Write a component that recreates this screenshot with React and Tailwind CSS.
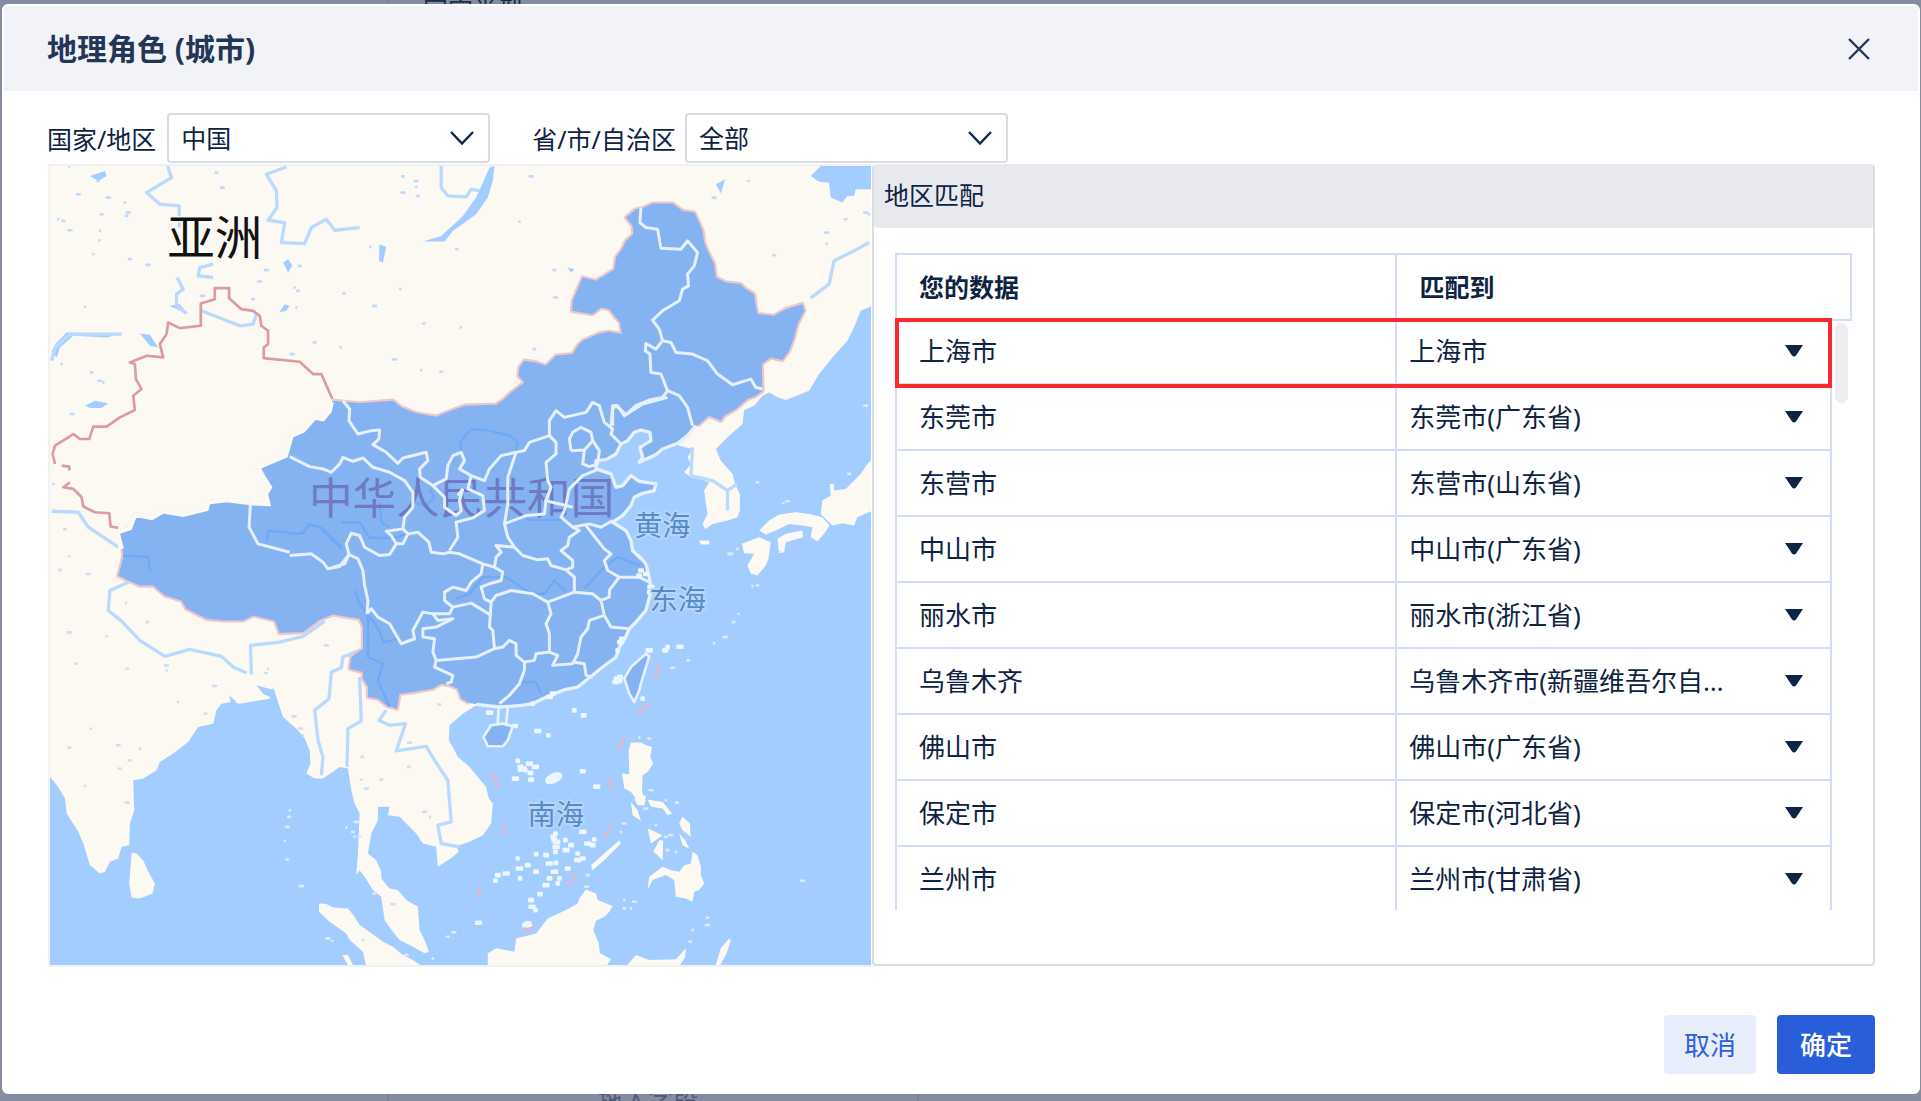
import React, { useState } from 'react';

const rows = [
  { source: '上海市', target: '上海市' },
  { source: '东莞市', target: '东莞市(广东省)' },
  { source: '东营市', target: '东营市(山东省)' },
  { source: '中山市', target: '中山市(广东省)' },
  { source: '丽水市', target: '丽水市(浙江省)' },
  { source: '乌鲁木齐', target: '乌鲁木齐市(新疆维吾尔自治区)' },
  { source: '佛山市', target: '佛山市(广东省)' },
  { source: '保定市', target: '保定市(河北省)' },
  { source: '兰州市', target: '兰州市(甘肃省)' },
];

// The outlines are drawn tile by tile, each list is relative to its tile origin
const shift = (dx, dy, list) =>
  list
    .split(' ')
    .map((p) => {
      const [x, y] = p.split(',').map(Number);
      return `${x + dx},${y + dy}`;
    })
    .join(' ');

const nw = (list) => shift(0, 0, list);
const ne = (list) => shift(1230, 0, list);
const sw = (list) => shift(0, 1170, list);
const se = (list) => shift(1230, 1170, list);
const mid = (list) => shift(750, 720, list);

const chinaNorth = [
  nw('878,720 960,728 1060,720 1085,740 1130,758 1190,768'),
  ne('10,748 45,735 140,732 165,715 185,695 225,665 207,645 210,620 225,600 260,605 290,615 320,585 370,580 385,555 400,540 450,518 480,513 518,520 512,485 495,465 480,445 455,440 430,460 368,450 370,420 385,385 400,350 440,360 465,345 495,325 500,290 520,262 530,240 552,220 550,195 530,170 560,145 585,140 610,128 670,128 700,150 735,155 745,175 760,210 765,245 775,270 795,310 800,350 830,365 875,370 890,385 915,400 920,435 925,460 975,465 1010,445 1060,430 1066,450 1045,490 1035,530 1020,570 1000,598 965,590 938,610 940,690 920,705 895,715 860,745 825,765 815,780 780,765 745,795'),
].join(' ');

const chinaCoast = [
  ne('740,795 715,825 685,848 640,865 620,882 570,905 580,890 572,860 605,840 602,815 575,808 555,815 535,840 515,850 500,880 470,897 440,900 440,925 485,940 500,980 520,975 545,945 570,962 620,970 615,990 580,998 555,1010 545,1035 520,1065 490,1085 530,1110 545,1140 550,1170 575,1195'),
  se('568,15 590,40 600,80 606,120 590,180 560,215 540,235 528,262 510,290 500,320 460,350 420,382 385,410 345,418 310,432 280,445 250,460 215,465 180,468 150,470 80,462'),
].join(' ');

const chinaSouth = [
  se('60,458 35,445 25,415 0,405'),
  sw('1205,400 1180,415 1120,425 1080,430 1072,475 1040,465 1015,445 985,440 985,410 970,385 970,365 930,355 935,320 970,295 970,230 960,205 925,200 880,192 840,208 790,245 720,248 705,210 640,195 610,210 550,210 500,205 470,190 440,175 425,150 375,135 340,105 300,105 265,90 235,75 245,40 250,15'),
  nw('248,1165 232,1115 270,1102 285,1062 335,1072 370,1052 430,1062 500,1045 505,1025 560,1018 640,1028 685,1030 678,1000 690,980 668,945 655,920 738,885 755,825 790,810 825,770 850,775 870,750'),
].join(' ');

const land = [
  [
    nw('30,15 2345,15'),
    ne('1085,45 1110,62 1140,65 1145,110 1180,125 1195,105 1215,105 1220,85 1270,85 1270,435 1235,450 1215,500 1195,540 1150,590 1110,640 1080,690 1010,718 985,710 960,695 940,705 915,735 885,748 880,790 835,830 800,865 815,900 850,940 858,970 872,1000 872,1050 865,1070 835,1080 790,1090 768,1105 760,1090 775,1060 770,1030 765,990 780,965 750,955 725,950 705,935 725,910 715,890 730,865 690,855 500,700 300,1100'),
    se('100,300 80,465 40,490 0,525'),
    sw('1230,525 1228,570 1245,600'),
    se('25,620 60,650 110,710 118,745 130,760 125,820 100,855 60,875 20,888 28,905 10,920'),
    sw('1225,930 1195,950 1190,890 1150,880 1130,850 1110,830 1080,800 1045,795 1050,770 1015,770 1015,810 995,850 985,910 1010,930 1025,965 1025,985 1050,1015 1075,1020 1100,1050 1135,1070 1140,1140 1155,1170 1168,1205 1155,1210 1110,1185 1080,1170 1060,1145 1035,1110 1025,1040 1000,1020 975,980 960,960 950,975 955,910 960,790 945,760 935,720 925,655 900,650 850,685 825,685 800,670 812,640 810,600 795,565 775,540 730,500 710,440 700,410 690,445 600,460 575,455 545,460 530,480 520,520 475,530 445,575 400,610 360,635 350,660 310,685 280,690 283,780 270,820 268,885 245,890 235,925 210,935 195,965 180,970 150,945 130,880 115,845 80,790 75,745 55,710 30,680'),
  ].join(' '),
  sw('275,908 290,910 310,930 325,965 345,1000 338,1030 300,1045 275,1042 268,1000 272,950'),
  sw('838,1060 860,1062 880,1072 925,1075 945,1100 960,1125 1010,1160 1030,1175 1060,1190 1090,1215 1120,1230 1150,1250 980,1250 970,1205 930,1170 920,1150 870,1115 838,1085'),
  se('410,1018 440,1030 445,1050 490,1068 480,1085 465,1100 440,1112 432,1140 448,1180 452,1210 485,1228 470,1250 115,1250 115,1210 140,1195 195,1205 200,1165 260,1150 295,1105 350,1080 385,1060 390,1045'),
  se('530,1250 560,1215 600,1230 680,1228 710,1195 708,1220 690,1250'),
  se('545,577 575,577 590,585 608,590 603,620 612,640 595,665 580,675 578,725 590,755 560,745 545,725 525,715 518,670 540,672 538,600'),
  se('730,905 745,915 755,950 755,975 765,1000 750,1020 735,1025 730,1055 710,1045 680,1040 675,990 650,975 610,990 595,1020 600,980 620,965 640,950 665,960 690,965 705,945 725,940'),
  se('595,835 640,855 605,880'),
  se('545,755 565,780 575,812 550,795'),
  se('612,905 630,870 642,870 640,930 625,915'),
  se('700,800 722,820 724,860 700,840 690,820'),
  se('690,850 708,870 720,895 700,885'),
  se('595,748 640,755 668,790 655,795 640,775 605,770'),
  se('555,745 590,735 585,765 565,765'),
  se('510,870 515,880 470,925 430,960 425,945'),
  se('840,1165 845,1172 830,1215 810,1250 798,1250 815,1195'),
  sw('908,1215 925,1215 940,1245 925,1245'),
  ne('1270,895 1270,1050 1225,1070 1215,1095 1180,1088 1150,1095 1115,1060 1120,1020 1145,1005 1142,970 1155,970 1155,990 1190,985 1235,940 1255,910'),
  ne('930,1110 960,1080 990,1062 1040,1055 1080,1060 1120,1070 1142,1095 1125,1120 1105,1142 1085,1130 1090,1100 1060,1095 1020,1090 980,1110 950,1122'),
  ne('985,1135 1010,1120 1060,1110 1062,1130 1010,1145 1005,1175 990,1178'),
  ne('878,1150 930,1130 965,1145 958,1195 950,1215 925,1245 905,1240 895,1215 915,1180 885,1178'),
  ne('750,1140 780,1140 780,1152 755,1152'),
];

const provinces = [
  mid('160,0 180,25 178,60 205,100 245,90 270,88 268,115 250,132 290,155 325,188 340,172 410,155 415,180 390,205 392,230 430,255 465,290 465,320 500,345 515,330 510,300 520,265'),
  mid('0,168 60,198 100,205 125,215 150,190 160,170 190,182 220,172 250,200 300,215 345,240 370,275 370,320 345,350 340,385 290,392 305,405 320,430 300,462 270,465 225,440 210,405 185,398 170,430 178,462'),
  mid('0,465 65,460 100,485 115,505 150,498 178,462 205,475 220,510 225,555 235,600 232,640'),
  mid('340,385 355,400 340,430 320,430'),
  mid('355,400 385,395 418,425 425,455 460,460 480,455 510,460 545,475 580,490 615,500 640,515 635,540 600,550 575,560 585,595 605,605'),
  mid('430,255 470,235 475,195 490,165 515,155 525,180 510,205 545,225 585,240 600,205 635,165 680,155'),
  mid('545,225 535,265 580,285 585,330 550,352 500,365 505,410 480,450'),
  mid('520,265 505,285'),
  mid('680,155 665,200 655,230 655,310 645,370 655,410 675,440 700,465 745,478 775,475 785,495 830,508 855,530 855,575'),
  mid('680,155 705,150 720,125 780,105 800,125 800,160 770,185 775,240 785,260 770,300 765,340 710,345 645,370'),
  mid('780,105 780,60 800,30 825,50 890,35 910,5 930,15 945,65 970,85 965,100 995,130'),
  mid('965,75 970,15 985,15 1005,45 1060,10 1135,-10'),
  mid('845,150 840,115 850,95 875,80 905,95 910,120 885,148 845,150'),
  mid('885,148 880,190 900,198 925,190 930,150 910,120'),
  mid('930,205 880,225 840,265 830,310 825,330'),
  mid('765,300 830,315 850,320'),
  mid('825,330 815,350 850,380 900,370 935,380 970,360'),
  mid('850,380 870,390 840,410 835,435 815,450 850,480 850,500 830,508'),
  mid('890,375 925,420 945,445 965,460 945,480 955,510 990,530 960,570 960,590 935,600'),
  mid('990,530 1050,530 1080,545'),
  mid('675,440 620,435 635,455 620,470 615,500'),
  mid('580,490 575,520 545,545 530,570 490,560 465,575 465,600 490,620 480,640 430,640 400,635 370,690 375,715 335,730 300,670 265,650 245,625 232,640'),
  mid('430,640 445,660 490,655 440,680 400,685 400,710 435,715 430,755 440,780 500,775 560,770 615,745 610,690 600,680 605,605'),
  mid('490,620 545,608 565,620 605,645'),
  mid('605,605 620,585 665,570 730,580 775,605 785,640 770,670 780,700 780,755 740,760 735,780 705,785 680,765 680,730 660,720 640,740 615,745'),
  mid('775,605 855,575 910,580 935,600 945,645 900,660 895,685 875,710 865,760 850,790 790,795 805,765 780,755'),
  mid('945,645 965,680 1020,685'),
  mid('850,785 885,790 890,825 910,830'),
  mid('705,785 705,810 690,850 660,885 630,910'),
  mid('440,780 435,800 490,825 485,845 470,850'),
  ne('575,140 572,185 590,200 625,205 635,262 695,265 715,240 745,275 735,315 715,340 718,375 700,385 690,420 640,450 610,478 630,505 640,540 620,565 590,548 588,570 602,580 605,635 635,640 655,690 640,710 600,718 560,735 530,762 500,735 490,745 490,795'),
  ne('640,540 665,545 680,575 730,580 775,600 805,640 850,672 905,655 920,680 940,685'),
  ne('655,690 690,705 715,740 730,795'),
];

const seaIslands = [
  se('590,310 600,318 575,400 570,420 555,455 540,430 525,385 545,350'),
  se('125,525 160,520 190,528 175,570 160,588 115,588 102,560'),
];

const chinaRivers = [
  mid('0,400 40,398 60,372 90,380 160,448'),
  mid('155,365 210,365 240,412 320,412 350,400'),
  mid('515,155 512,125 545,85 600,90 660,105 685,125 680,155'),
  mid('270,305 275,365 300,380'),
  mid('370,305 410,315 435,290 420,265'),
  mid('710,358 815,358'),
  mid('500,595 540,580 580,530 650,530 725,580 765,580 795,540 830,575'),
  mid('885,565 945,500 985,470 1050,495'),
  mid('235,640 235,770 280,790 265,840 300,920'),
  mid('195,570 210,610 270,690 280,725 330,715'),
  mid('695,845 740,845 755,880'),
  sw('250,15 325,20 330,60'),
  nw('680,1145 685,1110 785,1120 810,1090 850,1105 905,1160'),
];

const rivers = [
  nw('383,15 395,50 320,95 360,130 418,135 418,200'),
  nw('740,18 680,40 710,90 712,140 685,178 735,185 725,245 795,248 815,200 860,175 885,208 960,200'),
  nw('1205,15 1205,80 1225,105 1280,108 1295,85 1320,90'),
  nw('520,310 480,320 475,345 520,350'),
  nw('412,350 430,385 410,400 410,435 440,458'),
  nw('485,450 600,495 640,490 650,460'),
  nw('35,1052 115,1055 145,1100 235,1160'),
  nw('35,600 45,560 90,520 245,520'),
  sw('265,95 210,120 205,180 245,212 300,270 375,318 450,297 545,318 580,350 620,368'),
  sw('635,372 632,285 720,275 790,258 855,212'),
  sw('960,300 910,320 905,352 875,365 868,445 825,480 835,570 850,620 845,675'),
  sw('960,380 965,512 925,535 922,650'),
  sw('1040,480 1018,510 1050,525 1098,520 1070,602 1160,588 1185,630 1225,690 1235,815 1195,825 1205,880 1260,890'),
  ne('1260,245 1215,270 1155,300 1140,370 1085,412'),
  ne('730,860 725,945 790,960 835,990 865,970'),
  ne('835,990 835,1050'),
];

const lakes = [
  nw('1365,15 1360,60 1345,110 1310,160 1240,210 1215,242 1150,242 1205,225 1270,165 1310,110 1350,20'),
  nw('135,735 165,720 205,728 185,742 150,742'),
  nw('35,570 50,545 80,515 240,520 200,530 100,525 60,560 50,590'),
  nw('300,518 330,522 355,560 330,555'),
  nw('150,45 195,30 200,45 175,60'),
  nw('730,305 745,295 758,315 745,335'),
  nw('1020,250 1040,258 1030,305 1018,300'),
  ne('800,70 828,55 815,98'),
  nw('718,455 735,430 750,435 740,450'),
  nw('388,435 420,430 445,460'),
  sw('568,435 590,455 575,465'),
  sw('650,405 705,420 690,440 670,430'),
  ne('355,320 375,325 365,335'),
];

const borders = [
  nw('45,910 38,880 45,855 85,830 100,820 120,835 148,835 160,798 200,798 240,770 285,748 280,705 305,685 288,655 285,610 270,605 320,585 370,590 360,550 380,520 385,485 420,502 483,495 483,428 525,415 525,382 568,382 568,412 605,445 640,450 660,465 665,495 685,510 685,550 672,560 672,592 780,603 820,640 845,640 878,715'),
  nw('65,915 88,918 88,930'),
  nw('90,965 70,980 100,985 125,1010 130,1038 165,1055 208,1058 212,1098 235,1102'),
];

const dashes = [
  se('628,340 618,388'),
  se('598,460 565,492'),
  se('525,562 505,600'),
  se('128,670 148,712'),
  se('485,680 485,720'),
  se('168,815 155,855'),
  se('485,825 468,865'),
  se('380,970 358,1005'),
  se('90,1010 90,1045'),
  se('222,1142 260,1130'),
];

const reefs = se(
  '205,632 213,650 240,640 228,660 243,668 258,650 212,658 245,688 198,685 225,655 400,663 442,709 318,850 315,870 320,890 318,905 312,860 322,875 348,870 365,885 350,900 385,910 400,925 415,880 435,868 430,885 400,845 260,912 290,915 300,940 320,938 235,945 210,955 205,925 260,965 315,965 330,985 300,985 290,1005 325,1000 355,955 385,930 212,985 145,975 170,970 138,992 245,1050 248,1070 258,1080 272,1032 235,1120 225,1125 240,1128 87,1118 375,480 403,495 265,542 297,555 197,527 120,487 655,290 648,300 692,289 500,385 512,380 500,395 512,392 518,265 514,275 505,300 310,430 300,440 250,460 590,70 605,110 600,125 570,75 600,300 580,445 575,60'
).split(' ');

const specks = nw(
  '88,16 175,60 115,100 255,125 185,160 205,110 55,175 70,180 90,208 180,210 260,165 265,155 178,238 270,295 325,312 160,280 780,315 660,362 765,380 775,390 680,328 770,440 640,415 488,405 135,438 1090,46 1130,60 1130,78 1135,105 1090,95 992,258 913,398 1005,435 1082,385 1153,488 1065,596 903,560 825,545 757,580 1145,628 1205,633 180,660 190,665 155,635 97,760 65,610 530,35 548,80 40,970 75,1106 1475,46 1440,182 1252,265 1548,410 1264,500 1545,328 2025,110 2128,60 2205,283 2363,215 2363,248 2420,175 2480,155 2490,160 1485,565'
).split(' ');

const southSpecks = sw(
  '88,18 60,58 145,70 258,158 322,215 88,246 200,258 262,355 380,345 380,360 108,340 525,407 415,455 497,490 763,498 152,535 88,592 235,585 300,595 240,655 262,757 135,707 270,630 860,285 685,355 678,368 783,535 790,555 968,620 980,715 965,688 1108,650 1155,785 1172,800 1200,463 1060,1062 970,1170 1025,688 1110,577'
).split(' ');

const sandSpecks = [
  sw('750,780 748,800 743,830 735,872 743,928 785,1008 920,832 940,845 950,815 945,860 960,860 865,1165 878,1172 1225,1160 1243,1147 1180,1225 1005,1030 1100,1215'),
  se('868,190 853,215 828,260 795,278 717,330 670,352 570,562 600,565 605,720 650,750 683,757 590,775 620,825 650,860 665,855 680,905 655,900 525,820 515,845 415,975 412,1010 525,1050 525,1075 555,1055 545,1075 775,1103 775,1125 730,1140 723,1175 1060,992 910,107 925,105 845,10 995,3'),
  ne('925,965 1015,1022 1003,1028 1200,940 1250,735 865,1165 840,1180'),
]
  .join(' ')
  .split(' ');

const Dots = ({ points, size, color }) =>
  points.map((p, i) => {
    const [x, y] = p.split(',').map(Number);
    const width = size + (i % 3) * 4;
    return <rect key={i} x={x - width / 2} y={y - size / 2} width={width} height={size} rx="3" fill={color} />;
  });

const Lines = ({ items, ...props }) => (
  <g fill="none" strokeLinejoin="round" {...props}>
    {items.map((points, i) => (
      <polyline key={i} points={points} />
    ))}
  </g>
);

const RegionMap = () => (
  <svg
    viewBox="30 15 2466 2400"
    preserveAspectRatio="xMidYMid slice"
    className="block h-full w-full bg-[#a3cdff]"
    role="img"
    aria-label="亚洲地图"
  >
    <g fill="#fcf9f2">
      {land.map((points, i) => (
        <polygon key={i} points={points} />
      ))}
    </g>
    <Dots points={sandSpecks} size={8} color="#dde9f5" />
    <g fill="#a3cdff">
      {lakes.map((points, i) => (
        <polygon key={i} points={points} />
      ))}
    </g>
    <Dots points={specks} size={8} color="#bddbfb" />
    <Dots points={southSpecks} size={8} color="#c9e0f8" />
    <Lines items={rivers} stroke="#b9dafc" strokeWidth="10" />
    <Lines items={borders} stroke="#de9aa3" strokeWidth="8" />
    <Lines items={[chinaNorth, chinaSouth]} stroke="#eec7c8" strokeWidth="13" />
    <polygon points={[chinaNorth, chinaCoast, chinaSouth].join(' ')} fill="#85b3f2" />
    <polyline
      points={nw('245,1165 232,1115 270,1102 285,1062 335,1072 370,1052 430,1062 500,1045 505,1025 560,1018 640,1028 685,1030 678,1000 690,980 668,945 655,920 738,885 755,825 790,810 825,770 850,775 870,750 876,724')}
      fill="none"
      stroke="#fcf9f2"
      strokeWidth="14"
    />
    <Lines items={chinaRivers} stroke="#6fa8f6" strokeWidth="7" />
    <text x="808" y="1060" fontSize="131" fill="#6a70bd" fillOpacity="0.85">
      中华人民共和国
    </text>
    <Lines items={provinces} stroke="#e6effd" strokeWidth="9" />
    <Lines
      items={[mid('178,462 165,490 130,500'), nw('632,1028 628,1100 655,1150 750,1175')]}
      stroke="#e6effd"
      strokeWidth="9"
    />
    <Lines items={[chinaCoast]} stroke="#e6f0fe" strokeWidth="10" />
    <g fill="#85b3f2" stroke="#e6f0fe" strokeWidth="8" strokeLinejoin="round">
      {seaIslands.map((points, i) => (
        <polygon key={i} points={points} />
      ))}
    </g>
    <Lines items={[se('148,465 145,520'), se('175,470 170,520')]} stroke="#e6f0fe" strokeWidth="8" />
    <Dots points={reefs} size={14} color="#edf5ff" />
    <ellipse cx="1543" cy="1854" rx="28" ry="15" transform="rotate(-25 1543 1854)" fill="#edf5ff" />
    <Lines items={dashes} stroke="#d9b9cf" strokeWidth="9" />
    <text x="382" y="283" fontSize="143" fill="#111111" stroke="#fcf9f2" strokeWidth="8" paintOrder="stroke">
      亚洲
    </text>
    <g fontSize="85" fill="#558bca" stroke="#b8d6f8" strokeWidth="10" paintOrder="stroke">
      <text x="1784" y="1126">黄海</text>
      <text x="1831" y="1350">东海</text>
      <text x="1464" y="1994">南海</text>
    </g>
  </svg>
);

const FilterSelect = ({ id, options }) => (
  <div className="grid w-[323px] items-center">
    <select
      id={id}
      className="col-start-1 row-start-1 h-[50px] w-full appearance-none rounded-sm border-2 border-[#d9dde3] bg-white pr-12 pl-3"
    >
      {options.map((option) => (
        <option key={option}>{option}</option>
      ))}
    </select>
    <svg
      viewBox="0 0 24 14"
      className="pointer-events-none col-start-1 row-start-1 mr-4 h-3.5 w-6 justify-self-end"
      fill="none"
      stroke="#0f2344"
      strokeWidth="2.4"
    >
      <path d="M1 1l11 11.500L23 1" />
    </svg>
  </div>
);

const MatchSelect = ({ label, value }) => (
  <div className="grid items-center">
    <select
      aria-label={label}
      className="col-start-1 row-start-1 h-16 w-full appearance-none overflow-hidden bg-transparent pr-[100px] pl-3 text-ellipsis whitespace-nowrap"
    >
      <option>{value}</option>
    </select>
    <svg
      viewBox="0 0 18 12"
      className="pointer-events-none col-start-1 row-start-1 mr-[27px] h-3 w-[18px] justify-self-end"
      fill="#0f2344"
    >
      <path d="M0 0h18l-7 10.500q-2 2-4 0z" />
    </svg>
  </div>
);

// Page that stays visible around the dialog
const Backdrop = () => (
  <div
    className="absolute inset-0 flex flex-col justify-between overflow-hidden bg-[#848da0] pl-[387px] text-[25px] leading-7"
    aria-hidden="true"
  >
    <p className="-mt-1 border-l-2 border-[#788298] pl-[34px] text-[#1b2c4d]">国家类型</p>
    <p className="-mb-3 w-[532px] border-x-2 border-[#788298] pl-[209px] text-[#4c5b78]">拖入字段</p>
  </div>
);

const App = () => {
  const [open, setOpen] = useState(true);

  return (
    <div className="relative min-h-screen pt-1 pr-px pb-[7px] pl-0.5 font-['Noto_Sans','Noto_Sans_CJK_SC',sans-serif] text-[26px] leading-8 text-[#0f2344]">
      <Backdrop />
      {open && (
        <div
          role="dialog"
          aria-labelledby="dialog-title"
          className="relative rounded-md border-2 border-white bg-white"
        >
          <header className="flex h-[85px] items-center justify-between bg-[#f2f3f8] pr-12 pl-[43px] text-[#233656]">
            <h2 id="dialog-title" className="text-[30px] font-bold">
              地理角色 (城市)
            </h2>
            <button type="button" aria-label="关闭" onClick={() => setOpen(false)}>
              <svg viewBox="0 0 22 22" className="size-[22px]" fill="none" stroke="currentColor" strokeWidth="2.4">
                <path d="M1 1l20 20M21 1L1 21" />
              </svg>
            </button>
          </header>

          <div className="px-[43px] pt-[22px] pb-[18px]">
            <div className="flex items-center text-[25px]">
              <label htmlFor="country" className="mr-[11px] pt-0.5">
                国家/地区
              </label>
              <FilterSelect id="country" options={['中国']} />
              <label htmlFor="province" className="mr-[9px] ml-[42px] pt-0.5">
                省/市/自治区
              </label>
              <FilterSelect id="province" options={['全部']} />
            </div>

            <div className="mt-px grid grid-cols-[825fr_1003fr]">
              <div className="mr-px ml-px h-[803px] border-2 border-r-0 border-[#f1f1f2] font-['Noto_Sans_CJK_SC',sans-serif]">
                <RegionMap />
              </div>

              <section className="h-[802px] rounded-sm border-2 border-t-0 border-[#d9dde3]">
                <h3 className="flex h-16 items-center rounded-sm bg-[#e8e9ed] pb-0.5 pl-2.5 text-[25px]">地区匹配</h3>
                <div className="mt-[25px] mr-[21px] ml-[21px]">
                  <table className="w-full table-fixed border-collapse text-left text-[25px]">
                    <thead>
                      <tr className="h-[66px] border-2 border-[#d3ddf7]">
                        <th className="w-[52.4%] border-r-2 border-[#d3ddf7] pl-[22px] font-bold">您的数据</th>
                        <th className="pl-[22px] font-bold">匹配到</th>
                      </tr>
                    </thead>
                  </table>
                  <div className="-mt-[3px] flex h-[592px] overflow-hidden">
                    <div className="relative grow">
                      <table className="w-full table-fixed border-collapse">
                        <tbody>
                          {rows.map((row) => (
                            <tr key={row.source} className="h-[66px] border-x-2 border-b-2 border-[#d3ddf7]">
                              <td className="w-[53.5%] border-r-2 border-[#d3ddf7] pl-[22px]">{row.source}</td>
                              <td>
                                <MatchSelect label={row.source} value={row.target} />
                              </td>
                            </tr>
                          ))}
                        </tbody>
                      </table>
                      <div className="pointer-events-none absolute inset-x-0 top-0 h-[70px] border-4 border-[#ff272e]" />
                    </div>
                    <div className="w-5 shrink-0 pt-[5px] pl-[3px]">
                      <div className="h-20 w-[13px] rounded-full bg-[#edeef1]" />
                    </div>
                  </div>
                </div>
              </section>
            </div>

            <footer className="mt-12 flex justify-end gap-[21px]">
              <button
                type="button"
                className="h-[59px] rounded-sm bg-[#e8eefb] px-5 text-[#2b60de]"
                onClick={() => setOpen(false)}
              >
                取消
              </button>
              <button
                type="button"
                className="h-[59px] rounded-sm bg-[#295edb] px-[23px] font-medium text-white"
                onClick={() => setOpen(false)}
              >
                确定
              </button>
            </footer>
          </div>
        </div>
      )}
    </div>
  );
};

export default App;
